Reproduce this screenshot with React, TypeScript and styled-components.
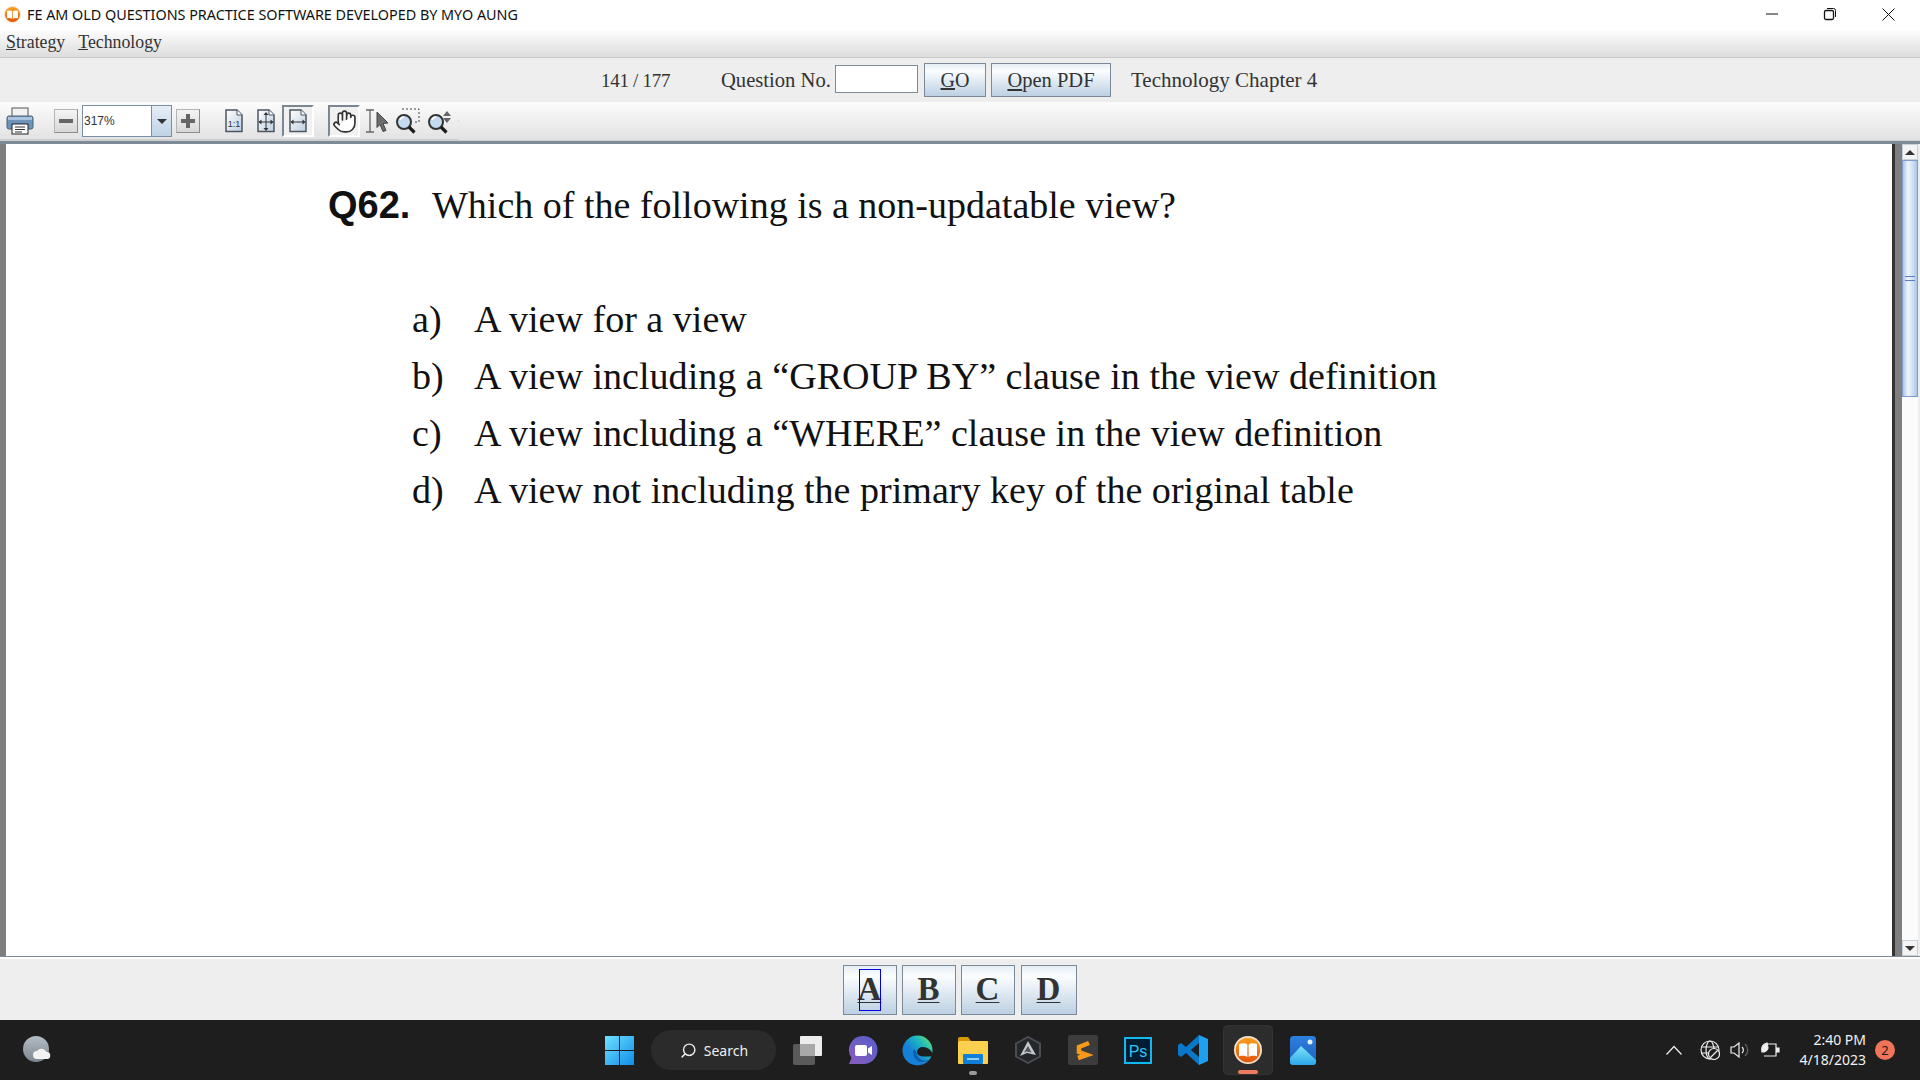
import * as React from 'react'
import styled, { createGlobalStyle } from 'styled-components'
import { Hand, Search } from 'lucide-react'

const GlobalStyle = createGlobalStyle`
  html, body {
    margin: 0;
    padding: 0;
    width: 1920px;
    height: 1080px;
    overflow: hidden;
    background: #fff;
  }
  * { box-sizing: border-box; }
`

const serif = `"Liberation Serif", "Times New Roman", serif`
const ui = `"Noto Sans", "Open Sans", sans-serif`

const Page = styled.div`
  width: 1920px;
  height: 1080px;
  display: flex;
  flex-direction: column;
`

/* window title */
const TitleBar = styled.div`
  height: 30px;
  flex: none;
  background: #fff;
  display: flex;
  align-items: center;
  padding: 0 3px 2px 4px;
`
const AppTitle = styled.div`
  margin-left: 6px;
  font: 14.4px ${ui};
  letter-spacing: -0.02px;
  color: #111;
  white-space: nowrap;
  flex: 1;
`
const WinButton = styled.div`
  width: 58px;
  height: 28px;
  display: flex;
  align-items: center;
  justify-content: center;
`

/* menu */
const MenuBar = styled.div`
  height: 28px;
  flex: none;
  background: linear-gradient(#fdfdfd, #dddddd);
  border-bottom: 1px solid #c8c8c8;
  display: flex;
  align-items: center;
  gap: 13px;
  padding: 0 0 2px 6px;
  font: 17.800px ${serif};
  color: #333;
`

/* question navigation */
const InfoBar = styled.div`
  height: 44px;
  flex: none;
  background: #eeeeee;
  display: flex;
  align-items: center;
  padding: 0 0 0 601px;
  font: 20.600px ${serif};
  color: #333;
`
const Counter = styled.span`
  width: 120px;
  font-size: 19px;
  letter-spacing: -0.3px;
  padding-top: 1px;
`
const Label = styled.span`
  width: 114px;
  padding-top: 1px;
`
const NumberInput = styled.input`
  width: 83px;
  height: 28px;
  margin: 0 6px 2px 0;
  padding: 0;
  background: #fff;
  border: 1px solid #7a8a99;
`
const NavButton = styled.button<{ $width: number; $size: number }>`
  width: ${(p) => p.$width}px;
  height: 34px;
  margin-right: 5px;
  padding: 1px 0 0;
  font: ${(p) => p.$size}px ${serif};
  color: #333;
  background: linear-gradient(#e5eef6, #fbfdfe 22%, #bcd0e3);
  border: 1px solid #7a8a99;
`
const ChapterName = styled.span`
  margin-left: 15px;
  font-size: 21px;
  padding-top: 1px;
`

/* pdf viewer toolbar */
const Toolbar = styled.div`
  height: 39px;
  flex: none;
  background: linear-gradient(#fcfcfc, #e2e2e2);
  border-bottom: 1px solid #d0d0d0;
`
const ToolStrip = styled.div`
  width: 459px;
  height: 38px;
  display: flex;
  align-items: center;
  padding: 1px 0 0 6px;
  border-bottom: 1px solid #cfcfcf;
`
const ToolIcon = styled.div<{ $width: number; $left: number; $selected?: boolean }>`
  width: ${(p) => p.$width}px;
  height: 32px;
  margin-left: ${(p) => p.$left}px;
  flex: none;
  display: flex;
  align-items: center;
  justify-content: center;
  ${(p) =>
    p.$selected &&
    `
    background: #f1f1f1;
    border-top: 2px solid #7d8791;
    border-left: 2px solid #7d8791;
    border-right: 2px solid #fff;
    border-bottom: 2px solid #fff;
  `}
`
const SquareButton = styled.div<{ $left: number }>`
  width: 24px;
  height: 24px;
  margin-left: ${(p) => p.$left}px;
  flex: none;
  background: linear-gradient(#f4f4f4, #d8d8d8);
  border: 1px solid #b4b4b4;
  border-right-color: #8c8c8c;
  border-bottom-color: #8c8c8c;
  display: flex;
  align-items: center;
  justify-content: center;
`
const ZoomCombo = styled.div`
  width: 90px;
  height: 32px;
  margin-left: 4px;
  flex: none;
  background: #fff;
  border: 1px solid #7a8fa6;
  display: flex;
`
const ZoomValue = styled.div`
  flex: 1;
  font: 12px "Liberation Sans", Arial, sans-serif;
  color: #333;
  line-height: 30px;
  padding-left: 1px;
`
const ZoomArrow = styled.div`
  width: 20px;
  background: linear-gradient(#e6eff7, #bfd2e6);
  border-left: 1px solid #7a8fa6;
  display: flex;
  align-items: center;
  justify-content: center;
`
const Caret = styled.div<{ $up?: boolean }>`
  width: 0;
  height: 0;
  border-left: 5px solid transparent;
  border-right: 5px solid transparent;
  ${(p) => (p.$up ? 'border-bottom: 5px solid #333;' : 'border-top: 5px solid #333;')}
`
const ToolDash = styled.div`
  width: 18px;
  height: 2px;
  margin-left: 6px;
  background: #dcdcdc;
`

/* document area */
const Viewer = styled.div`
  height: 816px;
  flex: none;
  border-top: 3px solid #7d8b99;
  border-bottom: 1px solid #7d8b99;
  display: flex;
  background: #fff;
`
const LeftEdge = styled.div`
  width: 6px;
  background: #7f7f7f;
`
const PdfPage = styled.div`
  flex: 1;
  padding: 36px 0 0 322px;
  background: #fff;
`
const Question = styled.div`
  display: flex;
  align-items: baseline;
  font: 38px/50px ${serif};
  color: #111;
`
const QuestionNo = styled.span`
  width: 104px;
  font: bold 38px "Liberation Sans", Arial, sans-serif;
`
const Options = styled.div`
  margin: 61px 0 0 84px;
  display: grid;
  grid-template-columns: 62px auto;
  grid-auto-rows: 56.8px;
  align-items: center;
  justify-content: start;
  font: 38.100px ${serif};
  color: #111;
`
const DarkEdge = styled.div`
  width: 3px;
  background: #333;
`
const GrayEdge = styled.div`
  width: 7px;
  background: #7f7f7f;
`
const ScrollBar = styled.div`
  width: 16px;
  display: flex;
  flex-direction: column;
  background: #fff;
`
const ScrollEnd = styled.div`
  height: 16px;
  flex: none;
  background: #f4f4f4;
  border: 1px solid #c8d0d8;
  display: flex;
  align-items: center;
  justify-content: center;
`
const ScrollThumb = styled.div`
  height: 237px;
  flex: none;
  background: linear-gradient(90deg, #a9c4e8, #eef4fb 35%, #cfe0f2 70%, #a9c4e8);
  border: 1px solid #7f9ccb;
  display: flex;
  align-items: center;
  justify-content: center;
`
const ThumbGrip = styled.div`
  width: 10px;
  height: 5px;
  border-top: 1px solid #5d7fc0;
  border-bottom: 1px solid #5d7fc0;
`
const ScrollTrack = styled.div`
  flex: 1;
  background: #fbfbfb;
`
const RightGap = styled.div`
  width: 2px;
  background: #eeeeee;
`

/* answers */
const AnswerBar = styled.div`
  flex: 1;
  background: #eeeeee;
  border-top: 2px solid #fff;
  display: flex;
  align-items: center;
  justify-content: center;
  gap: 5px;
  padding-right: 1px;
`
const AnswerButton = styled.button<{ $wide?: boolean }>`
  width: ${(p) => (p.$wide ? 56 : 54)}px;
  height: 50px;
  margin-left: ${(p) => (p.$wide ? 1 : 0)}px;
  padding: 0;
  position: relative;
  font: bold 33px ${serif};
  text-decoration: underline;
  text-decoration-thickness: 1px;
  text-underline-offset: 2px;
  color: #333;
  background: linear-gradient(#e5eef6, #fbfdfe 22%, #bcd0e3);
  border: 1px solid #7a8a99;
`
const FocusRing = styled.span`
  position: absolute;
  left: 15px;
  top: 3px;
  width: 22px;
  height: 42px;
  border: 1px solid #0000e0;
`

/* windows taskbar */
const TaskBar = styled.div`
  height: 60px;
  flex: none;
  background: #1e1e1e;
  display: grid;
  grid-template-columns: 1fr auto 1fr;
  align-items: center;
`
const Weather = styled.div`
  padding-left: 22px;
  display: flex;
`
const TaskItems = styled.div`
  display: flex;
  align-items: center;
  height: 60px;
  padding-left: 2.500px;
`
const TaskSlot = styled.div<{ $left?: number; $active?: boolean; $dot?: boolean }>`
  position: relative;
  width: 50px;
  height: 50px;
  margin-left: ${(p) => p.$left ?? 5}px;
  border-radius: 5px;
  display: flex;
  align-items: center;
  justify-content: center;
  ${(p) => p.$active && 'background: #2c2c2c; box-shadow: inset 0 0 0 1px #333;'}
  ${(p) =>
    (p.$dot || p.$active) &&
    `
    &::after {
      content: '';
      position: absolute;
      bottom: ${p.$active ? 1 : 0}px;
      left: 50%;
      width: ${p.$active ? 20 : 8}px;
      height: 4px;
      margin-left: ${p.$active ? -10 : -4}px;
      border-radius: 2px;
      background: ${p.$active ? '#ee7a62' : '#9a9a9a'};
    }
  `}
`
const SearchPill = styled.div`
  width: 125px;
  height: 40px;
  margin-left: 6px;
  border-radius: 20px;
  background: #2b2b2b;
  display: flex;
  align-items: center;
  padding-left: 29px;
  gap: 7px;
  font: 14px ${ui};
  color: #f0f0f0;
`
const Tray = styled.div`
  display: flex;
  align-items: center;
  justify-content: flex-end;
  padding-right: 25px;
`
const TrayIcon = styled.div<{ $left: number }>`
  margin-left: ${(p) => p.$left}px;
  display: flex;
`
const Clock = styled.div`
  margin-left: 20px;
  text-align: right;
  font: 14px/20px ${ui};
  color: #f2f2f2;
`
const Badge = styled.div`
  width: 20px;
  height: 20px;
  margin-left: 9px;
  border-radius: 50%;
  background: #ef7459;
  color: #1a1a1a;
  font: 13px/20px ${ui};
  text-align: center;
`

const U = styled.span`
  text-decoration: underline;
`

const BookLogo: React.FC<{ size: number; id: string }> = ({ size, id }) => (
  <svg width={size} height={size} viewBox="0 0 28 28">
    <defs>
      <linearGradient id={id} x1="0" y1="0" x2="0" y2="1">
        <stop offset="0" stopColor="#f9a01e" />
        <stop offset="1" stopColor="#e2560a" />
      </linearGradient>
    </defs>
    <circle cx="14" cy="14" r="14" fill="#f4e3d2" />
    <circle cx="14" cy="14" r="12.300" fill={`url(#${id})`} />
    <path d="M5 8c3.500-1.200 7-.9 8.400.7v12.300c-1.800-1.400-5-1.600-8.400-.8z" fill="#fff" />
    <path d="M23 8c-3.500-1.200-7-.9-8.400.7v12.300c1.800-1.400 5-1.600 8.400-.8z" fill="#fff" />
  </svg>
)

const PageShape: React.FC<{ children?: React.ReactNode }> = ({ children }) => (
  <svg width="20" height="24" viewBox="0 0 20 24">
    <defs>
      <linearGradient id="pageGrad" x1="0" y1="0" x2="1" y2="1">
        <stop offset="0" stopColor="#fff" />
        <stop offset="1" stopColor="#bccee3" />
      </linearGradient>
    </defs>
    <path d="M2 1h11l5 5v16.500H2z" fill="url(#pageGrad)" stroke="#4c5560" strokeWidth="1.500" />
    <path d="M13 1v5h5" fill="#fff" stroke="#4c5560" />
    {children}
  </svg>
)

const Magnifier: React.FC = () => (
  <g>
    <circle cx="9" cy="14" r="7" fill="#c4daf0" stroke="#333" strokeWidth="2" />
    <path d="M5 12a4.500 4.500 0 0 1 4-3" fill="none" stroke="#fff" strokeWidth="1.500" />
    <path d="M14 19l5.500 5.500" stroke="#1c1c1c" strokeWidth="3.200" />
  </g>
)

const PrintIcon = () => (
  <svg width="28" height="28" viewBox="0 0 28 28">
    <rect x="6" y="1" width="16" height="9" fill="#f2f2f2" stroke="#555" />
    <path d="M3 9h22a2 2 0 0 1 2 2v9a2 2 0 0 1-2 2H3a2 2 0 0 1-2-2v-9a2 2 0 0 1 2-2z" fill="#6e93b8" stroke="#4a5e73" />
    <rect x="2" y="10" width="24" height="3" fill="#a9c4de" />
    <rect x="6" y="17" width="16" height="10" fill="#fff" stroke="#222" />
    <path d="M9 20h10M9 22.500h10M9 25h7" stroke="#333" />
  </svg>
)

const App: React.FC = () => (
  <Page>
    <GlobalStyle />
    <TitleBar>
      <BookLogo size={17} id="bookSmall" />
      <AppTitle>FE AM OLD QUESTIONS PRACTICE SOFTWARE DEVELOPED BY MYO AUNG</AppTitle>
      <WinButton>
        <svg width="12" height="12" viewBox="0 0 12 12">
          <path d="M0 6h12" stroke="#111" />
        </svg>
      </WinButton>
      <WinButton>
        <svg width="14" height="14" viewBox="0 0 14 14" fill="none" stroke="#111">
          <rect x="1.500" y="3.500" width="9" height="9" rx="1.500" strokeWidth="1.300" />
          <path d="M4 1.500h6.500a2 2 0 0 1 2 2V10" />
        </svg>
      </WinButton>
      <WinButton>
        <svg width="13" height="13" viewBox="0 0 13 13">
          <path d="M.5.5l12 12M12.500.5l-12 12" stroke="#111" />
        </svg>
      </WinButton>
    </TitleBar>

    <MenuBar>
      <span>
        <U>S</U>trategy
      </span>
      <span>
        <U>T</U>echnology
      </span>
    </MenuBar>

    <InfoBar>
      <Counter>141 / 177</Counter>
      <Label>Question No.</Label>
      <NumberInput />
      <NavButton $width={62} $size={20}>
        <U>G</U>O
      </NavButton>
      <NavButton $width={120} $size={20.5}>
        <U>O</U>pen PDF
      </NavButton>
      <ChapterName>Technology Chapter 4</ChapterName>
    </InfoBar>

    <Toolbar>
      <ToolStrip>
        <ToolIcon $width={28} $left={0}>
          <PrintIcon />
        </ToolIcon>
        <SquareButton $left={20}>
          <svg width="14" height="14" viewBox="0 0 14 14">
            <path d="M0 7h14" stroke="#666" strokeWidth="4" />
          </svg>
        </SquareButton>
        <ZoomCombo>
          <ZoomValue>317%</ZoomValue>
          <ZoomArrow>
            <Caret />
          </ZoomArrow>
        </ZoomCombo>
        <SquareButton $left={4}>
          <svg width="14" height="14" viewBox="0 0 14 14">
            <path d="M0 7h14M7 0v14" stroke="#666" strokeWidth="4" />
          </svg>
        </SquareButton>
        <ToolIcon $width={20} $left={24}>
          <PageShape>
            <text x="10" y="18" fontSize="9" textAnchor="middle" fontFamily="Liberation Sans" fill="#333">
              1:1
            </text>
          </PageShape>
        </ToolIcon>
        <ToolIcon $width={20} $left={12}>
          <PageShape>
            <path d="M10 4v17M3.500 13h13" stroke="#333" />
            <path d="M10 3l-2.500 3h5zM10 22l-2.500-3h5zM2.500 13l3-2.500v5zM17.500 13l-3-2.500v5z" fill="#333" />
          </PageShape>
        </ToolIcon>
        <ToolIcon $width={32} $left={6} $selected>
          <PageShape>
            <path d="M3.500 13h13" stroke="#333" />
            <path d="M2.500 13l3-2.500v5zM17.500 13l-3-2.500v5z" fill="#333" />
          </PageShape>
        </ToolIcon>
        <ToolIcon $width={32} $left={14} $selected>
          <Hand size={25} color="#333" fill="#fff" strokeWidth={1.6} />
        </ToolIcon>
        <ToolIcon $width={26} $left={4}>
          <svg width="26" height="26" viewBox="0 0 26 26">
            <path d="M2 2h8M2 24h8M6 2v22" stroke="#666" strokeWidth="1.300" fill="none" />
            <path d="M13 4l11 11-5 .500 3 7-3 1-3-7-3 3z" fill="#6d6d6d" stroke="#444" />
          </svg>
        </ToolIcon>
        <ToolIcon $width={25} $left={5}>
          <svg width="25" height="26" viewBox="0 0 25 26">
            <path d="M7 1h17v13h-4" fill="none" stroke="#444" strokeDasharray="2 2" />
            <Magnifier />
          </svg>
        </ToolIcon>
        <ToolIcon $width={25} $left={7}>
          <svg width="25" height="26" viewBox="0 0 25 26">
            <Magnifier />
            <path d="M20 3l4 5h-8zM20 15l4-5h-8z" fill="#666" />
          </svg>
        </ToolIcon>
        <ToolDash />
      </ToolStrip>
    </Toolbar>

    <Viewer>
      <LeftEdge />
      <PdfPage>
        <Question>
          <QuestionNo>Q62.</QuestionNo>
          <span>Which of the following is a non-updatable view?</span>
        </Question>
        <Options>
          <span>a)</span>
          <span>A view for a view</span>
          <span>b)</span>
          <span>A view including a “GROUP BY” clause in the view definition</span>
          <span>c)</span>
          <span>A view including a “WHERE” clause in the view definition</span>
          <span>d)</span>
          <span>A view not including the primary key of the original table</span>
        </Options>
      </PdfPage>
      <DarkEdge />
      <GrayEdge />
      <ScrollBar>
        <ScrollEnd>
          <Caret $up />
        </ScrollEnd>
        <ScrollThumb>
          <ThumbGrip />
        </ScrollThumb>
        <ScrollTrack />
        <ScrollEnd>
          <Caret />
        </ScrollEnd>
      </ScrollBar>
      <RightGap />
    </Viewer>

    <AnswerBar>
      <AnswerButton>
        A
        <FocusRing />
      </AnswerButton>
      <AnswerButton>B</AnswerButton>
      <AnswerButton>C</AnswerButton>
      <AnswerButton $wide>D</AnswerButton>
    </AnswerBar>

    <TaskBar>
      <Weather>
        <svg width="30" height="30" viewBox="0 0 30 30">
          <defs>
            <linearGradient id="moonGrad" x1="0" y1="0" x2="0" y2="1">
              <stop offset="0" stopColor="#b4bcc4" />
              <stop offset="1" stopColor="#7d8791" />
            </linearGradient>
          </defs>
          <circle cx="14" cy="14" r="13" fill="url(#moonGrad)" />
          <path d="M15 24a4 4 0 0 1 0-8 5.500 5.500 0 0 1 9.500 1 3.500 3.500 0 0 1 .5 7z" fill="#f2f2f2" />
        </svg>
      </Weather>
      <TaskItems>
        <TaskSlot $left={0}>
          <svg width="29" height="29" viewBox="0 0 29 29">
            <defs>
              <linearGradient id="winGrad" x1="0" y1="0" x2="1" y2="1">
                <stop offset="0" stopColor="#6fe0ff" />
                <stop offset="1" stopColor="#0f8ee8" />
              </linearGradient>
            </defs>
            <path d="M0 0h14v14H0zM15 0h14v14H15zM0 15h14v14H0zM15 15h14v14H15z" fill="url(#winGrad)" />
          </svg>
        </TaskSlot>
        <SearchPill>
          <Search size={17} color="#f0f0f0" style={{ transform: 'scaleX(-1)' }} />
          Search
        </SearchPill>
        <TaskSlot $left={7}>
          <svg width="29" height="29" viewBox="0 0 29 29">
            <rect x="0" y="8" width="22" height="21" rx="2" fill="#5a5a5a" />
            <rect x="7" y="0" width="22" height="20" rx="1" fill="#ececec" />
            <rect x="7" y="8" width="15" height="12" fill="#a8a8a8" />
          </svg>
        </TaskSlot>
        <TaskSlot>
          <svg width="30" height="30" viewBox="0 0 30 30">
            <defs>
              <linearGradient id="chatGrad" x1="1" y1="0" x2="0" y2="1">
                <stop offset="0" stopColor="#5560c8" />
                <stop offset="1" stopColor="#8a5cc0" />
              </linearGradient>
            </defs>
            <path d="M15.500 1a14 14 0 0 1 0 28H1l2.500-6A14 14 0 0 1 15.500 1z" fill="url(#chatGrad)" />
            <rect x="7" y="10" width="12" height="11" rx="2" fill="#fff" />
            <path d="M20 13.500l4-2.500v9l-4-2.500z" fill="#fff" />
          </svg>
        </TaskSlot>
        <TaskSlot>
          <svg width="31" height="31" viewBox="0 0 31 31">
            <defs>
              <linearGradient id="edgeGrad" x1="0.100" y1="0.800" x2="0.900" y2="0.100">
                <stop offset="0.300" stopColor="#1580d8" />
                <stop offset="0.700" stopColor="#1fb8c0" />
                <stop offset="1" stopColor="#5fdc78" />
              </linearGradient>
            </defs>
            <circle cx="15.500" cy="15.500" r="15" fill="url(#edgeGrad)" />
            <path d="M31 19.500c-1.500-5-6.500-8-11-7.500-4 .5-6.500 4.500-4 7.500 2.500 2.500 8.500 2.500 15 1.500z" fill="#1e1e1e" />
            <path d="M12 14c-2 5 0 10 5 12.500 3 1.200 7 .6 10-1.500-5.500 1.500-10.500-.5-12-5-.8-2.500-.5-4.500-3-6z" fill="#0a5fb0" />
          </svg>
        </TaskSlot>
        <TaskSlot $dot>
          <svg width="30" height="27" viewBox="0 0 30 27">
            <path d="M0 2a2 2 0 0 1 2-2h8l3 4h-13z" fill="#d99a0a" />
            <rect x="0" y="4" width="30" height="23" rx="1" fill="#fcd04f" />
            <rect x="5" y="17" width="20" height="10" rx="1" fill="#0f7fd8" />
            <rect x="9" y="21" width="12" height="2" fill="#8fd0ff" />
          </svg>
        </TaskSlot>
        <TaskSlot>
          <svg width="26" height="28" viewBox="0 0 26 28">
            <path d="M13 0l13 7v14l-13 7L0 21V7z" fill="#4a4e53" />
            <path d="M13 2l11 6v12l-11 6-11-6V8z" fill="#24272a" />
            <path d="M13 5l8 14-9-2-7 3z" fill="#c4c8cc" />
            <path d="M13 10l3.500 6.500-5-1-2.500 1z" fill="#50565c" />
          </svg>
        </TaskSlot>
        <TaskSlot>
          <svg width="30" height="30" viewBox="0 0 30 30">
            <rect width="30" height="30" rx="2" fill="#3c3c3c" />
            <path d="M21 8l-10 4v5l8 3-9 3" fill="none" stroke="#f79a1b" strokeWidth="4.500" />
          </svg>
        </TaskSlot>
        <TaskSlot>
          <svg width="28" height="27" viewBox="0 0 28 27">
            <rect x="1" y="1" width="26" height="25" fill="#001d33" stroke="#12b8f0" strokeWidth="2" />
            <text x="14" y="20" fontSize="16" textAnchor="middle" fontFamily="Liberation Sans" fill="#31c5f4">
              Ps
            </text>
          </svg>
        </TaskSlot>
        <TaskSlot>
          <svg width="30" height="30" viewBox="0 0 30 30">
            <path d="M21 0L8 12 3 8l-3 2v10l3 2 5-4 13 12v-8l-8-7 8-7z" fill="#0a78c8" />
            <path d="M21 0l9 4v22l-9 4z" fill="#1ea0ee" />
          </svg>
        </TaskSlot>
        <TaskSlot $active>
          <BookLogo size={28} id="bookLarge" />
        </TaskSlot>
        <TaskSlot>
          <svg width="26" height="29" viewBox="0 0 26 29">
            <defs>
              <linearGradient id="photoGrad" x1="0" y1="0" x2="0" y2="1">
                <stop offset="0" stopColor="#2e7fe0" />
                <stop offset="1" stopColor="#1d5fb8" />
              </linearGradient>
              <linearGradient id="hillGrad" x1="0" y1="0" x2="0" y2="1">
                <stop offset="0" stopColor="#7fe4fa" />
                <stop offset="1" stopColor="#2aa8ea" />
              </linearGradient>
            </defs>
            <rect width="26" height="29" rx="3.500" fill="url(#photoGrad)" />
            <circle cx="20" cy="6" r="2.500" fill="#e4f1ff" />
            <path d="M0 22l11-12 15 14v2a3 3 0 0 1-3 3H3a3 3 0 0 1-3-3z" fill="url(#hillGrad)" />
          </svg>
        </TaskSlot>
      </TaskItems>
      <Tray>
        <TrayIcon $left={0}>
          <svg width="16" height="10" viewBox="0 0 16 10">
            <path d="M.5 9.500L8 1.500l7.500 8" fill="none" stroke="#eee" strokeWidth="1.200" />
          </svg>
        </TrayIcon>
        <TrayIcon $left={18}>
          <svg width="20" height="20" viewBox="0 0 20 20" fill="none" stroke="#eee" strokeWidth="1.200">
            <circle cx="10" cy="10" r="9" />
            <ellipse cx="10" cy="10" rx="4" ry="9" />
            <path d="M1 7h18M1 13h18" />
            <circle cx="14" cy="14" r="5.500" fill="#1e1e1e" />
            <path d="M10.500 17.500l7-7" />
          </svg>
        </TrayIcon>
        <TrayIcon $left={10}>
          <svg width="20" height="20" viewBox="0 0 20 20" fill="none" stroke="#eee" strokeWidth="1.200">
            <path d="M1 7h3l5-4v14l-5-4H1z" />
            <path d="M12 7a4 4 0 0 1 0 6" />
            <path d="M15 4a8 8 0 0 1 0 12" stroke="#666" />
          </svg>
        </TrayIcon>
        <TrayIcon $left={10}>
          <svg width="20" height="18" viewBox="0 0 20 18" fill="none" stroke="#eee" strokeWidth="1.200">
            <path d="M7 3h9v12H4" />
            <path d="M16 7h3v4h-3" fill="#eee" />
            <path d="M7 2C3 3 1 6 2 11c3 0 5-1 6-4z" fill="#eee" />
          </svg>
        </TrayIcon>
        <Clock>
          <div>2:40 PM</div>
          <div>4/18/2023</div>
        </Clock>
        <Badge>2</Badge>
      </Tray>
    </TaskBar>
  </Page>
)

export default App
